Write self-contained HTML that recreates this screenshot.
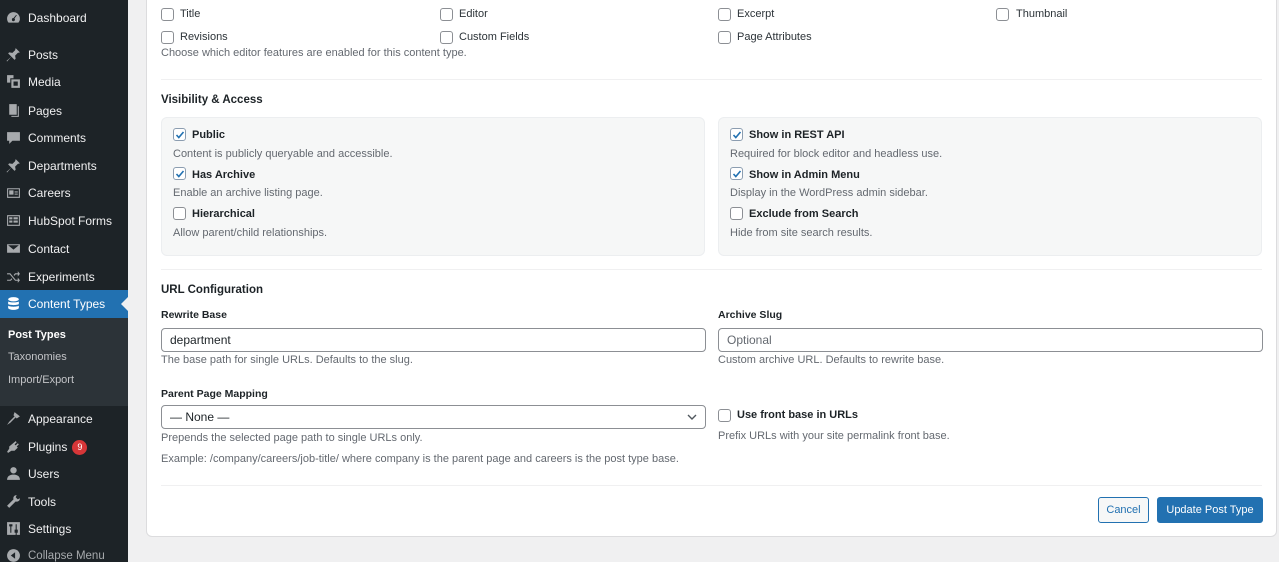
<!DOCTYPE html>
<html><head><meta charset="utf-8">
<style>
*{margin:0;padding:0;box-sizing:border-box}
html{width:1279px;height:562px;overflow:hidden}
body{width:1279px;height:562px;overflow:hidden;background:#f0f0f1;font-family:"Liberation Sans",Arial,sans-serif;position:relative;color:#1d2327}
#sb{position:absolute;left:0;top:0;width:128px;height:562px;background:#1d2327}
.mi{position:absolute;left:0;width:128px;height:28px;color:#f0f0f1;font-size:12px;line-height:28px;padding-left:28px}
.mi svg{position:absolute;left:6px;top:6px;width:15px;height:15px;fill:#a7aaad}
.cur{background:#2271b1;color:#fff}
.cur svg{fill:#fff}
.cur:after{content:"";position:absolute;right:0;top:7px;border:7px solid transparent;border-right-color:#f0f0f1}
#sub{position:absolute;left:0;top:318px;width:128px;height:88px;background:#2c3338}
.si{position:absolute;left:8px;font-size:11px;color:#c3c4c7}
.badge{display:inline-block;background:#d63638;color:#fff;border-radius:8px;font-size:9px;line-height:15px;width:15px;text-align:center;margin-left:5px;vertical-align:1px}
#card{position:absolute;left:146px;top:-6px;width:1131px;height:543px;background:#fff;border:1px solid #dcdcde;border-radius:6px}
.a{position:absolute;white-space:nowrap}
.cb{position:absolute;width:13px;height:13px;border:1px solid #8c8f94;border-radius:3px;background:#fff}
.cb.on svg{position:absolute;left:1px;top:1px;width:10px;height:10px}
.lbl{font-size:11px;color:#2c3338}
.b{font-size:11px;font-weight:bold;color:#1d2327}
.d{font-size:11px;color:#646970}
.h{font-size:12px;font-weight:bold;color:#1d2327}
.sep{position:absolute;left:161px;width:1101px;height:1px;background:#f0f0f1}
.panel{position:absolute;top:117px;height:139px;width:544px;background:#f6f7f7;border:1px solid #eceef0;border-radius:6px}
.inp{position:absolute;height:24px;border:1px solid #8c8f94;border-radius:4px;background:#fff;font-size:12px;line-height:22px;padding-left:8px}
.btn{position:absolute;height:26px;border-radius:3px;font-size:11px;line-height:24px;text-align:center}
</style></head><body>
<div id="sb">
<div class="mi" style="top:4px"><svg viewBox="0 0 14 14"><path d="M7 2a6 6 0 0 0-6 6c0 1.5.5 2.8 1.4 3.8h9.2A6 6 0 0 0 7 2zm0 8.5a1.5 1.5 0 1 1 0-3l2.5-3 .6.4-2.2 3A1.5 1.5 0 0 1 7 10.5z"/></svg>Dashboard</div>
<div class="mi" style="top:41px"><svg viewBox="0 0 14 14"><path d="M9 1l4 4-2 .5-2.5 2.5.5 3-1 1-3-3-4 4.5-.5-.5 4.5-4-3-3 1-1 3 .5L8.5 3z"/></svg>Posts</div>
<div class="mi" style="top:68px"><svg viewBox="0 0 14 14"><path d="M1 1h6v3H4v4H1zM5 5h8v8H5zm2 2v4h4V7z"/></svg>Media</div>
<div class="mi" style="top:97px"><svg viewBox="0 0 14 14"><path d="M3 1h7v10H3zM11 3h1v10H5v-1h6z"/></svg>Pages</div>
<div class="mi" style="top:124px"><svg viewBox="0 0 14 14"><path d="M1 2h12v8H6l-3 3v-3H1z"/></svg>Comments</div>
<div class="mi" style="top:152px"><svg viewBox="0 0 14 14"><path d="M9 1l4 4-2 .5-2.5 2.5.5 3-1 1-3-3-4 4.5-.5-.5 4.5-4-3-3 1-1 3 .5L8.5 3z"/></svg>Departments</div>
<div class="mi" style="top:179px"><svg viewBox="0 0 14 14"><path d="M1 3h12v9H1zm1 1v7h10V4zm1 1h4v4H3zm5 1h3v1H8zm0 2h3v1H8z"/></svg>Careers</div>
<div class="mi" style="top:207px"><svg viewBox="0 0 14 14"><path d="M1 2h12v10H1zm1 1v8h10V3zm1 1h3v2H3zm4 0h4v2H7zM3 7h3v2H3zm4 0h4v2H7z"/></svg>HubSpot Forms</div>
<div class="mi" style="top:235px"><svg viewBox="0 0 14 14"><path d="M1 3h12v8H1zm1 1l5 4 5-4z" /></svg>Contact</div>
<div class="mi" style="top:263px"><svg viewBox="0 0 14 14"><path d="M1 4h3l5 6h2V8l2 2.5-2 2.5v-2H8.5l-5-6H1zm0 6h3l1.2-1.4.7.8L4.5 11H1zm7.5-6H11V2l2 2.5L11 7V5H9l-1.2 1.4-.7-.8z"/></svg>Experiments</div>
<div class="mi cur" style="top:290px"><svg viewBox="0 0 14 14"><ellipse cx="7" cy="3" rx="5" ry="2"/><path d="M2 5c1 1.3 9 1.3 10 0v2.5c-1 1.3-9 1.3-10 0zm0 4c1 1.3 9 1.3 10 0v2c0 1.2-2.2 2-5 2s-5-.8-5-2z"/></svg>Content Types</div>
<div id="sub">
<div class="si" style="top:11px;color:#fff;font-weight:bold">Post Types</div>
<div class="si" style="top:33px">Taxonomies</div>
<div class="si" style="top:56px">Import/Export</div>
</div>
<div class="mi" style="top:405px"><svg viewBox="0 0 14 14"><path d="M8 1l5 4-3 2-1-1-5 5-3 2 2-3 5-5-1-1z"/></svg>Appearance</div>
<div class="mi" style="top:433px"><svg viewBox="0 0 14 14"><path d="M9 2l1 1-2 2 1 1 2-2 1 1-2 2 1 1-3 3H5l-3 2-1-1 2-3V7z"/></svg>Plugins<span class="badge">9</span></div>
<div class="mi" style="top:460px"><svg viewBox="0 0 14 14"><circle cx="7" cy="4" r="3"/><path d="M1 13c0-4 3-5 6-5s6 1 6 5z"/></svg>Users</div>
<div class="mi" style="top:488px"><svg viewBox="0 0 14 14"><path d="M10 1a3 3 0 0 0-3 4L1 11l2 2 6-6a3 3 0 0 0 4-3l-2 1-2-2z"/></svg>Tools</div>
<div class="mi" style="top:515px"><svg viewBox="0 0 14 14"><path d="M1 1h12v12H1zm2 2v2h1v6h1V5h1V3zm5 5v3h1v2h1v-2h1V8h-1V3H9v5z"/></svg>Settings</div>
<div class="mi" style="top:542px;color:#a7aaad;font-size:11.5px"><svg viewBox="0 0 14 14"><circle cx="7" cy="7" r="6"/><path d="M8.5 4v6L4.5 7z" fill="#1d2327"/></svg>Collapse Menu</div>
</div>

<div id="card"></div>

<div class="cb" style="left:161px;top:8px"></div><div class="a lbl" style="left:180px;top:8px">Title</div>
<div class="cb" style="left:440px;top:8px"></div><div class="a lbl" style="left:459px;top:8px">Editor</div>
<div class="cb" style="left:718px;top:8px"></div><div class="a lbl" style="left:737px;top:8px">Excerpt</div>
<div class="cb" style="left:996px;top:8px"></div><div class="a lbl" style="left:1016px;top:8px">Thumbnail</div>
<div class="cb" style="left:161px;top:31px"></div><div class="a lbl" style="left:180px;top:31px">Revisions</div>
<div class="cb" style="left:440px;top:31px"></div><div class="a lbl" style="left:459px;top:31px">Custom Fields</div>
<div class="cb" style="left:718px;top:31px"></div><div class="a lbl" style="left:737px;top:31px">Page Attributes</div>
<div class="a d" style="left:161px;top:47px">Choose which editor features are enabled for this content type.</div>
<div class="sep" style="top:79px"></div>

<div class="a h" style="left:161px;top:94px;font-size:11.5px">Visibility &amp; Access</div>
<div class="panel" style="left:161px"></div>
<div class="panel" style="left:718px"></div>

<div class="cb on" style="left:173px;top:128px;border-color:#8c9db0"><svg viewBox="0 0 10 10"><path d="M1.5 5l2.3 2.5L8.5 2" stroke="#2271b1" stroke-width="1.6" fill="none"/></svg></div><div class="a b" style="left:192px;top:129px">Public</div>
<div class="a d" style="left:173px;top:148px">Content is publicly queryable and accessible.</div>
<div class="cb on" style="left:173px;top:167px;border-color:#8c9db0"><svg viewBox="0 0 10 10"><path d="M1.5 5l2.3 2.5L8.5 2" stroke="#2271b1" stroke-width="1.6" fill="none"/></svg></div><div class="a b" style="left:192px;top:169px">Has Archive</div>
<div class="a d" style="left:173px;top:187px">Enable an archive listing page.</div>
<div class="cb" style="left:173px;top:207px"></div><div class="a b" style="left:192px;top:208px">Hierarchical</div>
<div class="a d" style="left:173px;top:227px">Allow parent/child relationships.</div>

<div class="cb on" style="left:730px;top:128px;border-color:#8c9db0"><svg viewBox="0 0 10 10"><path d="M1.5 5l2.3 2.5L8.5 2" stroke="#2271b1" stroke-width="1.6" fill="none"/></svg></div><div class="a b" style="left:749px;top:129px">Show in REST API</div>
<div class="a d" style="left:730px;top:148px">Required for block editor and headless use.</div>
<div class="cb on" style="left:730px;top:167px;border-color:#8c9db0"><svg viewBox="0 0 10 10"><path d="M1.5 5l2.3 2.5L8.5 2" stroke="#2271b1" stroke-width="1.6" fill="none"/></svg></div><div class="a b" style="left:749px;top:169px">Show in Admin Menu</div>
<div class="a d" style="left:730px;top:187px">Display in the WordPress admin sidebar.</div>
<div class="cb" style="left:730px;top:207px"></div><div class="a b" style="left:749px;top:208px">Exclude from Search</div>
<div class="a d" style="left:730px;top:227px">Hide from site search results.</div>

<div class="sep" style="top:269px"></div>
<div class="a h" style="left:161px;top:284px;font-size:11.5px">URL Configuration</div>
<div class="a b" style="left:161px;top:309px;font-size:10.5px">Rewrite Base</div>
<div class="inp" style="left:161px;top:328px;width:545px">department</div>
<div class="a d" style="left:161px;top:354px">The base path for single URLs. Defaults to the slug.</div>
<div class="a b" style="left:718px;top:309px;font-size:10.5px">Archive Slug</div>
<div class="inp" style="left:718px;top:328px;width:545px;color:#646970">Optional</div>
<div class="a d" style="left:718px;top:354px">Custom archive URL. Defaults to rewrite base.</div>

<div class="a b" style="left:161px;top:388px;font-size:10.5px">Parent Page Mapping</div>
<div class="inp" style="left:161px;top:405px;width:545px">— None —<svg style="position:absolute;right:8px;top:8px" width="10" height="7" viewBox="0 0 10 7"><path d="M1 1l4 4 4-4" stroke="#50575e" stroke-width="1.4" fill="none"/></svg></div>
<div class="a d" style="left:161px;top:432px">Prepends the selected page path to single URLs only.</div>
<div class="a d" style="left:161px;top:453px">Example: /company/careers/job-title/ where company is the parent page and careers is the post type base.</div>
<div class="cb" style="left:718px;top:409px"></div><div class="a b" style="left:737px;top:409px">Use front base in URLs</div>
<div class="a d" style="left:718px;top:430px">Prefix URLs with your site permalink front base.</div>

<div class="sep" style="top:485px"></div>
<div class="btn" style="left:1098px;top:497px;width:51px;border:1px solid #2271b1;color:#2271b1;background:#f6f7f7">Cancel</div>
<div class="btn" style="left:1157px;top:497px;width:106px;background:#2271b1;color:#fff;border:1px solid #2271b1">Update Post Type</div>
</body></html>
